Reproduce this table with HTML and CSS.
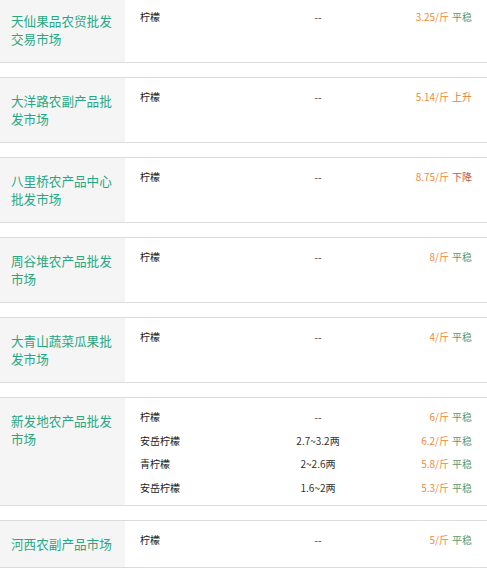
FILE: index.html
```html
<!DOCTYPE html>
<html lang="zh-CN">
<head>
<meta charset="utf-8">
<title>柠檬行情</title>
<link rel="stylesheet" href="styles.css">
</head>
<body>
<div class="list">
  <div class="card">
    <div class="market">天仙果品农贸批发交易市场</div>
    <div class="items">
      <div class="row"><span class="name">柠檬</span><span class="spec">--</span><span class="price">3.25/斤<span class="trend flat">平稳</span></span></div>
    </div>
  </div>
  <div class="card">
    <div class="market">大洋路农副产品批发市场</div>
    <div class="items">
      <div class="row"><span class="name">柠檬</span><span class="spec">--</span><span class="price">5.14/斤<span class="trend up">上升</span></span></div>
    </div>
  </div>
  <div class="card">
    <div class="market">八里桥农产品中心批发市场</div>
    <div class="items">
      <div class="row"><span class="name">柠檬</span><span class="spec">--</span><span class="price">8.75/斤<span class="trend down">下降</span></span></div>
    </div>
  </div>
  <div class="card">
    <div class="market">周谷堆农产品批发市场</div>
    <div class="items">
      <div class="row"><span class="name">柠檬</span><span class="spec">--</span><span class="price">8/斤<span class="trend flat">平稳</span></span></div>
    </div>
  </div>
  <div class="card">
    <div class="market">大青山蔬菜瓜果批发市场</div>
    <div class="items">
      <div class="row"><span class="name">柠檬</span><span class="spec">--</span><span class="price">4/斤<span class="trend flat">平稳</span></span></div>
    </div>
  </div>
  <div class="card">
    <div class="market">新发地农产品批发市场</div>
    <div class="items">
      <div class="row"><span class="name">柠檬</span><span class="spec">--</span><span class="price">6/斤<span class="trend flat">平稳</span></span></div>
      <div class="row"><span class="name">安岳柠檬</span><span class="spec">2.7~3.2两</span><span class="price">6.2/斤<span class="trend flat">平稳</span></span></div>
      <div class="row"><span class="name">青柠檬</span><span class="spec">2~2.6两</span><span class="price">5.8/斤<span class="trend flat">平稳</span></span></div>
      <div class="row"><span class="name">安岳柠檬</span><span class="spec">1.6~2两</span><span class="price">5.3/斤<span class="trend flat">平稳</span></span></div>
    </div>
  </div>
  <div class="card">
    <div class="market">河西农副产品市场</div>
    <div class="items">
      <div class="row"><span class="name">柠檬</span><span class="spec">--</span><span class="price">5/斤<span class="trend flat">平稳</span></span></div>
    </div>
  </div>
</div>
</body>
</html>
```
FILE: styles.css
```css
html, body {
  margin: 0;
  padding: 0;
  background: #fff;
}
body {
  font-family: "Microsoft YaHei", "Noto Sans CJK SC", "Noto Sans", sans-serif;
  color: #333;
}
.list {
  margin-top: -3px;
  display: flex;
  flex-direction: column;
  gap: 14px;
}
.card {
  display: flex;
  border-top: 1px solid #dcdcdc;
  border-bottom: 1px solid #dcdcdc;
}
.market {
  width: 108px;
  flex: none;
  background: #f5f5f5;
  padding: 14px 6px 14px 11px;
  font-size: 12.6px;
  line-height: 18px;
  color: #27a783;
}
.items {
  flex: 1;
  padding: 7px 15px 6px 15px;
}
.row {
  display: grid;
  grid-template-columns: 128px 100px 1fr;
  font-size: 10px;
  line-height: 23.5px;
}
.name {
  color: #222;
}
.spec {
  text-align: center;
  color: #333;
}
.price {
  text-align: right;
  color: #f0883a;
}
.trend {
  margin-left: 3px;
}
.trend.flat { color: #5b9a74; }
.trend.up { color: #e0803c; }
.trend.down { color: #bf5a4c; }
```
